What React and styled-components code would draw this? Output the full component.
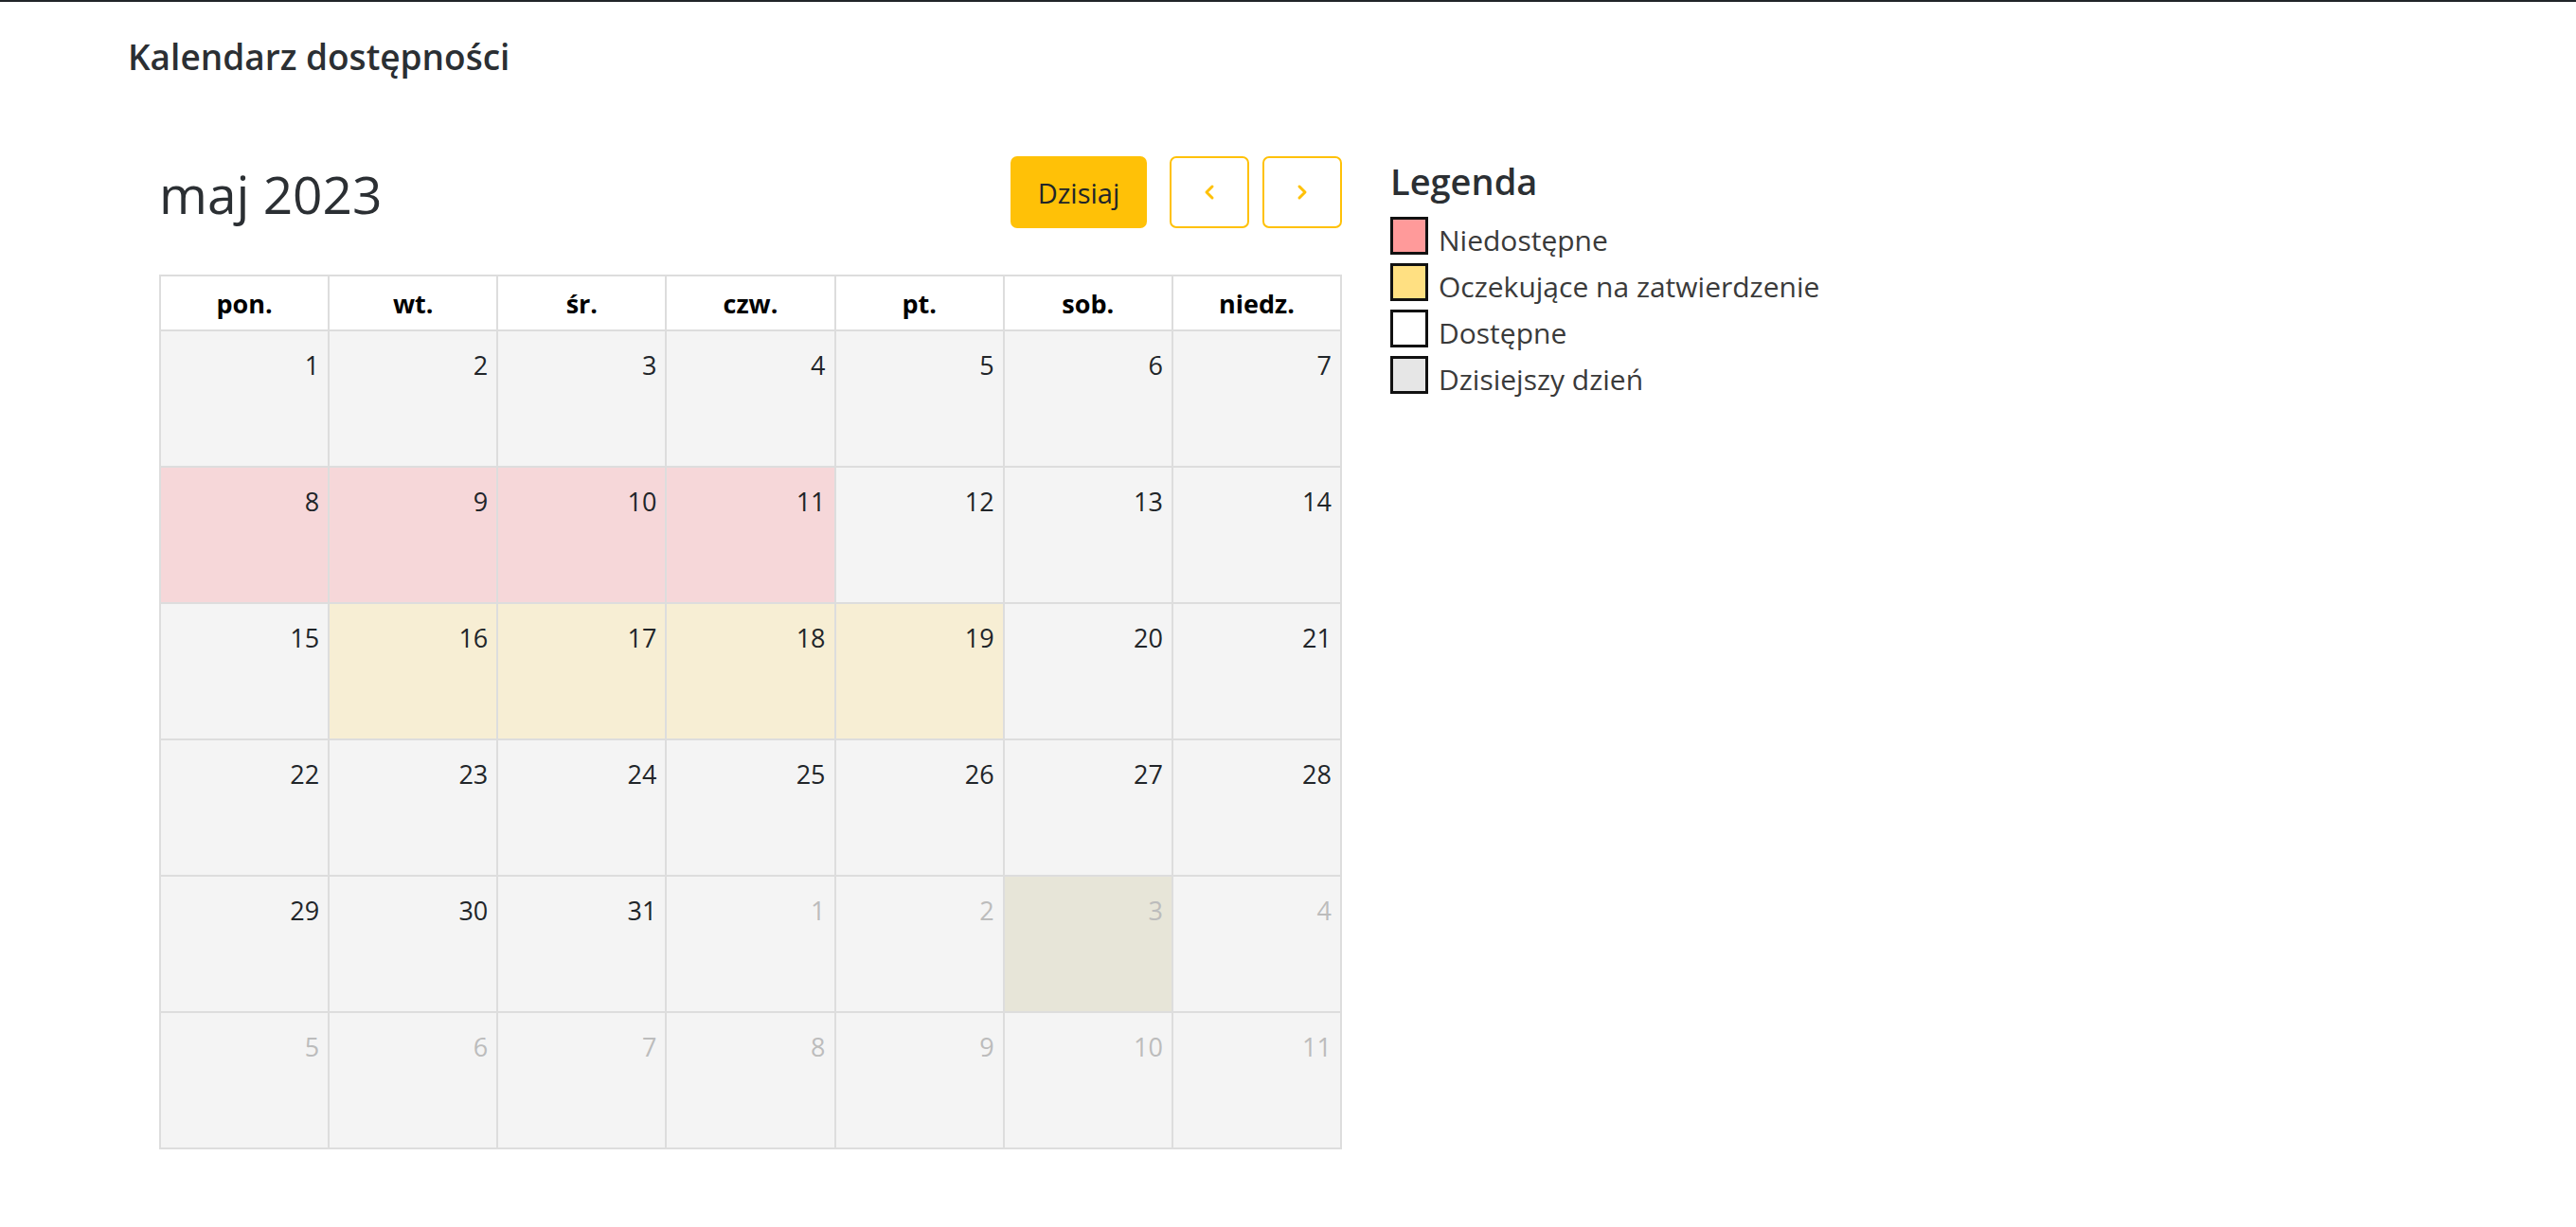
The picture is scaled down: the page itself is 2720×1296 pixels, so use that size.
import React from 'react';
import styled, { createGlobalStyle } from 'styled-components';

const GlobalStyle = createGlobalStyle`
  body {
    margin: 0;
    background: #fff;
    font-family: 'Open Sans', 'Noto Sans', sans-serif;
    color: #212529;
  }
`;

const TopLine = styled.div`
  height: 2px;
  background: #212529;
`;

const PageTitle = styled.h5`
  margin: 0;
  padding: 38px 0 0 135px;
  font-size: 37px;
  font-weight: 600;
  line-height: 40px;
  color: #2b2f33;
`;

const Main = styled.div`
  display: flex;
  align-items: flex-start;
  padding: 85px 0 0 168px;
`;

const Calendar = styled.div`
  width: 1249px;
`;

const Toolbar = styled.div`
  display: flex;
  align-items: center;
  justify-content: space-between;
  height: 76px;
`;

const MonthTitle = styled.h2`
  margin: 0;
  font-size: 55px;
  font-weight: 500;
  line-height: 76px;
  padding-top: 3px;
  color: #2b2f33;
`;

const Buttons = styled.div`
  display: flex;
  align-items: center;
  gap: 14px;
`;

const TodayButton = styled.button`
  width: 144px;
  height: 76px;
  margin-right: 10px;
  border: none;
  border-radius: 7px;
  background: #ffc107;
  color: #212529;
  font-family: inherit;
  font-size: 29px;
`;

const NavButton = styled.button`
  display: flex;
  align-items: center;
  justify-content: center;
  width: 84px;
  height: 76px;
  border: 2px solid #ffc107;
  border-radius: 7px;
  background: #fff;
  padding: 0;
`;

const Grid = styled.div`
  margin-top: 49px;
  display: grid;
  grid-template-columns: repeat(7, 1fr);
  border-top: 2px solid #ddd;
  border-left: 2px solid #ddd;
`;

const HeadCell = styled.div`
  height: 58px;
  box-sizing: border-box;
  display: flex;
  align-items: center;
  justify-content: center;
  border-right: 2px solid #ddd;
  border-bottom: 2px solid #ddd;
  font-size: 27px;
  font-weight: 700;
  color: #000;
`;

const tones = {
  busy: '#f6d7d9',
  pending: '#f7eed4',
  today: '#e7e5d8',
  normal: '#f4f4f4',
};

const DayCell = styled.div`
  height: 144px;
  box-sizing: border-box;
  padding: 16px 9px 0 0;
  text-align: right;
  border-right: 2px solid #ddd;
  border-bottom: 2px solid #ddd;
  background: ${(p) => tones[p.$tone]};
  font-size: 27px;
  line-height: 40px;
  color: ${(p) => (p.$other ? '#bcbcbc' : '#212529')};
`;

const Legend = styled.div`
  margin-left: 51px;
  margin-top: 2px;
`;

const LegendTitle = styled.h4`
  margin: 0 0 9px;
  font-size: 38px;
  font-weight: 600;
  line-height: 48px;
  color: #2b2f33;
`;

const LegendItem = styled.div`
  display: flex;
  align-items: center;
  gap: 11px;
  height: 49px;
  font-size: 30px;
  color: #3a3a3a;
`;

const LegendLabel = styled.span`
  margin-top: 10px;
  line-height: 40px;
`;

const Swatch = styled.span`
  flex: none;
  width: 40px;
  height: 40px;
  box-sizing: border-box;
  border: 3px solid #111;
  background: ${(p) => p.$color};
`;

const Chevron = ({ dir }) => (
  <svg width="20" height="24" viewBox="0 0 20 24">
    <polyline
      points={dir === 'left' ? '13,6 7,12 13,18' : '7,6 13,12 7,18'}
      fill="none"
      stroke="#ffc107"
      strokeWidth="3"
      strokeLinecap="round"
      strokeLinejoin="round"
    />
  </svg>
);

const headers = ['pon.', 'wt.', 'śr.', 'czw.', 'pt.', 'sob.', 'niedz.'];

// 6 weeks starting Mon 1 May 2023
const days = [];
for (let i = 0; i < 42; i++) {
  const inMonth = i < 31;
  const num = inMonth ? i + 1 : i - 30;
  let tone = 'normal';
  if (inMonth && num >= 8 && num <= 11) tone = 'busy';
  if (inMonth && num >= 16 && num <= 19) tone = 'pending';
  if (!inMonth && num === 3) tone = 'today';
  days.push({ num, other: !inMonth, tone });
}

const legend = [
  { label: 'Niedostępne', color: '#ff9a9a' },
  { label: 'Oczekujące na zatwierdzenie', color: '#ffe082' },
  { label: 'Dostępne', color: '#fff' },
  { label: 'Dzisiejszy dzień', color: '#e6e6e6' },
];

const App = () => {
  return (
    <>
      <GlobalStyle />
      <TopLine />
      <PageTitle>Kalendarz dostępności</PageTitle>
      <Main>
        <Calendar>
          <Toolbar>
            <MonthTitle>maj 2023</MonthTitle>
            <Buttons>
              <TodayButton>Dzisiaj</TodayButton>
              <NavButton aria-label="poprzedni">
                <Chevron dir="left" />
              </NavButton>
              <NavButton aria-label="następny">
                <Chevron dir="right" />
              </NavButton>
            </Buttons>
          </Toolbar>
          <Grid>
            {headers.map((h) => (
              <HeadCell key={h}>{h}</HeadCell>
            ))}
            {days.map((d, i) => (
              <DayCell key={i} $tone={d.tone} $other={d.other}>
                {d.num}
              </DayCell>
            ))}
          </Grid>
        </Calendar>
        <Legend>
          <LegendTitle>Legenda</LegendTitle>
          {legend.map((l) => (
            <LegendItem key={l.label}>
              <Swatch $color={l.color} />
              <LegendLabel>{l.label}</LegendLabel>
            </LegendItem>
          ))}
        </Legend>
      </Main>
    </>
  );
};

export default App;
